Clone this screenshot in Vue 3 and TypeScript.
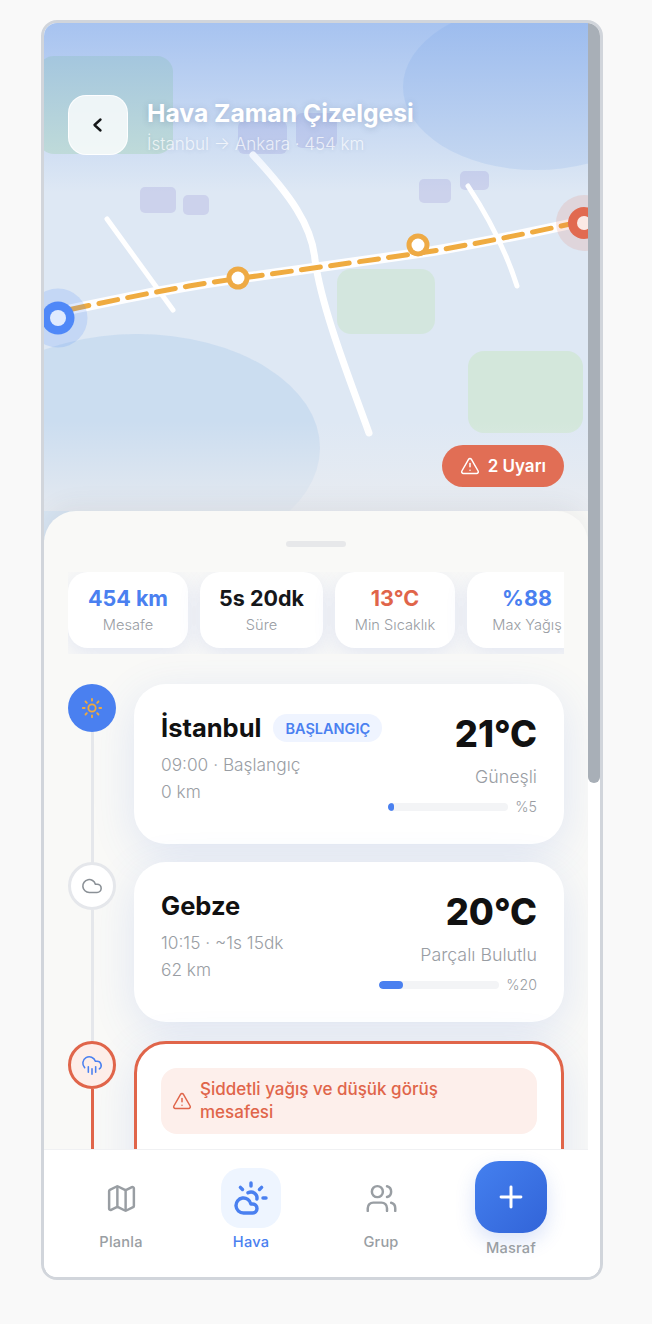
<template>
  <div class="frame">
    <div class="screen">
      <div class="content">
        <section class="map">
          <svg class="map-art" viewBox="44 23 544 517" width="544" height="517" aria-hidden="true">
            <ellipse cx="536" cy="87" rx="133" ry="83" fill="#93b8ea" opacity="0.24" />
            <ellipse cx="137" cy="448" rx="183" ry="114" fill="#bcd3ec" opacity="0.55" />
            <rect x="38" y="56" width="135" height="98" rx="16" fill="#b8dcc0" opacity="0.55" />
            <rect x="337" y="269" width="98" height="65" rx="14" fill="#cfe6d4" opacity="0.7" />
            <rect x="468" y="351" width="115" height="82" rx="16" fill="#cfe6d4" opacity="0.8" />
            <g fill="#ccd2ec">
              <rect x="238" y="121" width="49" height="33" rx="6" />
              <rect x="296" y="113" width="41" height="35" rx="6" />
              <rect x="140" y="187" width="36" height="26" rx="5" />
              <rect x="183" y="195" width="26" height="20" rx="5" />
              <rect x="419" y="179" width="32" height="24" rx="5" />
              <rect x="460" y="171" width="29" height="19" rx="5" />
            </g>
            <g fill="none" stroke="#fff" stroke-linecap="round">
              <path d="M253 155C290 195 312 225 315 260C322 310 350 380 369 433" stroke-width="7" />
              <path d="M107 219L173 310" stroke-width="5" />
              <path d="M468 186C485 212 505 248 517 286" stroke-width="5" />
            </g>
            <path class="route-base" :d="routePath" />
            <path class="route-dash" :d="routePath" />
            <g v-for="p in waypoints" :key="p.x">
              <circle :cx="p.x" :cy="p.y" r="11.5" fill="#eeaa45" />
              <circle :cx="p.x" :cy="p.y" r="6.5" fill="#fff" />
            </g>
            <circle cx="58" cy="318" r="16.5" fill="#5088f8" />
            <circle cx="58" cy="318" r="8" fill="#fff" />
            <circle cx="58" cy="318" r="29.5" fill="#5088f8" opacity="0.18" />
            <circle cx="584" cy="223" r="16" fill="#e16a50" />
            <circle cx="584" cy="223" r="7" fill="#fff" />
            <circle cx="584" cy="223" r="28" fill="#e16a50" opacity="0.15" />
          </svg>
          <div class="map-tint"></div>
          <div class="map-fade"></div>

          <header class="map-header">
            <button class="back-btn" aria-label="Geri">
              <svg viewBox="0 0 24 24" width="24" height="24" fill="none" stroke="#16181a" stroke-width="2.4" stroke-linecap="round" stroke-linejoin="round">
                <path d="m14.5 6.5-6 5.5 6 5.5" />
              </svg>
            </button>
            <div class="map-titles">
              <h1>Hava Zaman Çizelgesi</h1>
              <p>İstanbul → Ankara · 454 km</p>
            </div>
          </header>

          <div class="warn-pill">
            <svg viewBox="0 0 24 24" width="20" height="20" fill="none" stroke="#fff" stroke-width="1.8" stroke-linecap="round" stroke-linejoin="round">
              <path :d="trianglePath" />
              <path d="M12 9v4" />
              <path d="M12 17h.01" />
            </svg>
            <span>2 Uyarı</span>
          </div>
        </section>

        <section class="sheet">
          <div class="handle"></div>

          <div class="stats">
            <div v-for="s in stats" :key="s.label" class="stat" :style="{ minWidth: s.width + 'px' }">
              <strong :class="s.tone">{{ s.value }}</strong>
              <span>{{ s.label }}</span>
            </div>
          </div>

          <div class="timeline">
            <div class="stop">
              <div class="rail">
                <div class="dot dot-start">
                  <svg viewBox="0 0 24 24" width="22" height="22" fill="none" stroke="#f0a93c" stroke-width="2" stroke-linecap="round">
                    <circle cx="12" cy="12" r="4" />
                    <path d="M12 2v2M12 20v2M4.93 4.93l1.41 1.41M17.66 17.66l1.41 1.41M2 12h2M20 12h2M6.34 17.66l-1.41 1.41M19.07 4.93l-1.41 1.41" />
                  </svg>
                </div>
                <div class="rail-line"></div>
              </div>
              <article class="card">
                <div class="card-row">
                  <div class="card-main">
                    <div class="name-row">
                      <h2>İstanbul</h2>
                      <span class="badge">BAŞLANGIÇ</span>
                    </div>
                    <p class="meta first">09:00 · Başlangıç</p>
                    <p class="meta">0 km</p>
                  </div>
                  <div class="card-side">
                    <div class="temp">21°C</div>
                    <div class="cond">Güneşli</div>
                    <div class="rain">
                      <div class="rain-track"><div class="rain-fill" :style="{ width: '5%' }"></div></div>
                      <span>%5</span>
                    </div>
                  </div>
                </div>
              </article>
            </div>

            <div class="stop">
              <div class="rail">
                <div class="dot dot-plain">
                  <svg viewBox="0 0 24 24" width="22" height="22" fill="none" stroke="#8a9096" stroke-width="1.7" stroke-linecap="round" stroke-linejoin="round">
                    <path d="M17.5 19H9a7 7 0 1 1 6.71-9h1.79a4.5 4.5 0 1 1 0 9Z" />
                  </svg>
                </div>
                <div class="rail-line"></div>
              </div>
              <article class="card">
                <div class="card-row">
                  <div class="card-main">
                    <div class="name-row">
                      <h2>Gebze</h2>
                    </div>
                    <p class="meta first">10:15 · ~1s 15dk</p>
                    <p class="meta">62 km</p>
                  </div>
                  <div class="card-side">
                    <div class="temp">20°C</div>
                    <div class="cond">Parçalı Bulutlu</div>
                    <div class="rain">
                      <div class="rain-track"><div class="rain-fill" :style="{ width: '20%' }"></div></div>
                      <span>%20</span>
                    </div>
                  </div>
                </div>
              </article>
            </div>

            <div class="stop stop-alert">
              <div class="rail">
                <div class="dot dot-alert">
                  <svg viewBox="0 0 24 24" width="22" height="22" fill="none" stroke="#4a80f0" stroke-width="1.7" stroke-linecap="round" stroke-linejoin="round">
                    <path d="M4 14.899A7 7 0 1 1 15.71 8h1.79a4.5 4.5 0 0 1 2.5 8.242" />
                    <path d="M16 14v6" />
                    <path d="M8 14v6" />
                    <path d="M12 16v6" />
                  </svg>
                </div>
                <div class="rail-line"></div>
              </div>
              <article class="card card-alert">
                <div class="alert-box">
                  <svg viewBox="0 0 24 24" width="20" height="20" fill="none" stroke="#e0654a" stroke-width="1.8" stroke-linecap="round" stroke-linejoin="round">
                    <path :d="trianglePath" />
                    <path d="M12 9v4" />
                    <path d="M12 17h.01" />
                  </svg>
                  <span>Şiddetli yağış ve düşük görüş mesafesi</span>
                </div>
              </article>
            </div>
          </div>
        </section>
      </div>

      <nav class="tabbar">
        <a class="tab">
          <span class="tab-icon">
            <svg viewBox="0 0 24 24" width="33" height="33" fill="none" stroke="#999ea3" stroke-width="1.8" stroke-linecap="round" stroke-linejoin="round">
              <path d="M14.106 5.553a2 2 0 0 0 1.788 0l3.659-1.83A1 1 0 0 1 21 4.619v12.764a1 1 0 0 1-.553.894l-4.553 2.277a2 2 0 0 1-1.788 0l-4.212-2.106a2 2 0 0 0-1.788 0l-3.659 1.83A1 1 0 0 1 3 19.381V6.618a1 1 0 0 1 .553-.894l4.553-2.277a2 2 0 0 1 1.788 0z" />
              <path d="M15 5.764v15" />
              <path d="M9 3.236v15" />
            </svg>
          </span>
          <span>Planla</span>
        </a>
        <a class="tab active">
          <span class="tab-icon">
            <svg viewBox="0 0 24 24" width="36" height="36" fill="none" stroke="#4a80f0" stroke-width="2.3" stroke-linecap="round" stroke-linejoin="round">
              <path d="M12 2v2" />
              <path d="m4.93 4.93 1.41 1.41" />
              <path d="M20 12h2" />
              <path d="m19.07 4.93-1.41 1.41" />
              <path d="M15.947 12.65a4 4 0 0 0-5.925-4.128" />
              <path d="M13 22H7a5 5 0 1 1 4.9-6H13a3 3 0 0 1 0 6Z" />
            </svg>
          </span>
          <span>Hava</span>
        </a>
        <a class="tab">
          <span class="tab-icon">
            <svg viewBox="0 0 24 24" width="33" height="33" fill="none" stroke="#999ea3" stroke-width="1.8" stroke-linecap="round" stroke-linejoin="round">
              <path d="M16 21v-2a4 4 0 0 0-4-4H6a4 4 0 0 0-4 4v2" />
              <circle cx="9" cy="7" r="4" />
              <path d="M22 21v-2a4 4 0 0 0-3-3.87" />
              <path d="M16 3.13a4 4 0 0 1 0 7.75" />
            </svg>
          </span>
          <span>Grup</span>
        </a>
        <a class="tab tab-add">
          <span class="add-btn">
            <svg viewBox="0 0 24 24" width="34" height="34" fill="none" stroke="#fff" stroke-width="2.1" stroke-linecap="round">
              <path d="M5 12h14" />
              <path d="M12 5v14" />
            </svg>
          </span>
          <span>Masraf</span>
        </a>
      </nav>
    </div>

    <div class="scrollbar"><div class="thumb"></div></div>
  </div>
</template>

<script setup lang="ts">
interface Stat {
  value: string
  label: string
  tone: string
  width: number
}

const trianglePath = 'm21.73 18-8-14a2 2 0 0 0-3.48 0l-8 14A2 2 0 0 0 4 21h16a2 2 0 0 0 1.73-3'
const routePath = 'M58 312C120 299 190 284 257 276C320 267 380 259 433 251C480 243 530 233 584 221'

const waypoints = [
  { x: 238, y: 278 },
  { x: 418, y: 245 }
]

const stats: Stat[] = [
  { value: '454 km', label: 'Mesafe', tone: 'blue', width: 120 },
  { value: '5s 20dk', label: 'Süre', tone: '', width: 123 },
  { value: '13°C', label: 'Min Sıcaklık', tone: 'red', width: 120 },
  { value: '%88', label: 'Max Yağış', tone: 'blue', width: 120 }
]
</script>

<style>
html,
body {
  margin: 0;
  background: #f9f9f9;
}
</style>

<style scoped>
* {
  box-sizing: border-box;
}

.frame {
  display: flex;
  width: 562px;
  height: 1260px;
  margin: 20px 0 0 41px;
  border: 3px solid #d1d5db;
  border-radius: 16px;
  overflow: hidden;
  background: #fff;
  font-family: Inter, "Noto Sans", sans-serif;
  color: #111;
}

.screen {
  display: flex;
  flex-direction: column;
  width: 544px;
  height: 100%;
}

.content {
  flex: 1;
  min-height: 0;
  overflow: hidden;
  background: #f9f9f7;
}

.scrollbar {
  width: 12px;
  background: #fff;
}

.thumb {
  height: 760px;
  border-radius: 0 0 6px 6px;
  background: #a8afb7;
}

/* map */
.map {
  position: relative;
  height: 488px;
  background: #dee8f4;
}

.map-art {
  position: absolute;
  top: 0;
  left: 0;
  display: block;
}

.map-tint {
  position: absolute;
  top: 0;
  left: 0;
  right: 0;
  height: 170px;
  background: linear-gradient(180deg, rgba(100, 150, 235, 0.45), rgba(100, 150, 235, 0));
}

.map-fade {
  position: absolute;
  left: 0;
  right: 0;
  bottom: 0;
  height: 90px;
  background: linear-gradient(180deg, rgba(243, 243, 245, 0), rgba(236, 237, 240, 0.75));
}

.route-base {
  fill: none;
  stroke: #fff;
  stroke-width: 10;
  stroke-opacity: 0.95;
}

.route-dash {
  fill: none;
  stroke: #efab40;
  stroke-width: 5;
  stroke-linecap: round;
  stroke-dasharray: 19 10.3;
  stroke-dashoffset: -12.7;
}

.map-header {
  position: relative;
  display: flex;
  align-items: center;
  gap: 19px;
  padding: 72px 24px 0;
}

.back-btn {
  display: flex;
  align-items: center;
  justify-content: center;
  width: 60px;
  height: 60px;
  padding: 0;
  border: 1px solid rgba(255, 255, 255, 0.9);
  border-radius: 18px;
  background: rgba(255, 255, 255, 0.78);
}

.map-titles h1 {
  margin: 2px 0 5px;
  font-size: 24.7px;
  line-height: 30px;
  font-weight: 700;
  color: #fff;
  text-shadow: 0 1px 6px rgba(60, 80, 120, 0.25);
}

.map-titles p {
  margin: 0;
  font-size: 17px;
  line-height: 22px;
  font-weight: 300;
  color: rgba(255, 255, 255, 0.72);
  text-shadow: 0 1px 4px rgba(60, 80, 120, 0.12);
}

.warn-pill {
  position: absolute;
  top: 422px;
  right: 24px;
  display: flex;
  align-items: center;
  gap: 8px;
  height: 42px;
  padding: 0 18px;
  border-radius: 21px;
  background: #e16e55;
  color: #fff;
  font-size: 17px;
  font-weight: 600;
}

/* sheet */
.sheet {
  position: relative;
  padding: 30px 24px 0;
  border-radius: 32px 32px 0 0;
  background: #f9f9f7;
  box-shadow: 0 -6px 24px rgba(60, 70, 90, 0.07);
}

.handle {
  width: 60px;
  height: 6px;
  margin: 0 auto 25px;
  border-radius: 3px;
  background: #e7e8ea;
}

.stats {
  display: flex;
  gap: 12px;
  height: 82px;
  overflow: hidden;
}

.stat {
  display: flex;
  flex-direction: column;
  align-items: center;
  height: 76px;
  padding-top: 12px;
  border-radius: 20px;
  background: #fff;
  box-shadow: 0 6px 22px rgba(74, 110, 220, 0.13);
}

.stat strong {
  font-size: 21.5px;
  line-height: 28px;
  font-weight: 700;
  color: #15171a;
}

.stat strong.blue {
  color: #4a80f0;
}

.stat strong.red {
  color: #e0654a;
}

.stat span {
  margin-top: 3px;
  font-size: 14.6px;
  line-height: 20px;
  font-weight: 300;
  color: #999da3;
  white-space: nowrap;
}

/* timeline */
.timeline {
  display: flex;
  flex-direction: column;
  gap: 18px;
  margin-top: 30px;
}

.stop {
  display: flex;
  gap: 18px;
}

.rail {
  display: flex;
  flex-direction: column;
  align-items: center;
  flex: none;
  width: 48px;
}

.rail-line {
  flex: 1;
  width: 3px;
  margin-bottom: -19px;
  background: #e5e7eb;
}

.dot {
  position: relative;
  z-index: 1;
  display: flex;
  align-items: center;
  justify-content: center;
  flex: none;
  width: 48px;
  height: 48px;
  border-radius: 50%;
}

.dot-start {
  background: #4a80f0;
}

.dot-plain {
  border: 3px solid #e5e7eb;
  background: #fff;
}

.dot-alert {
  border: 3px solid #e0654a;
  background: #fdeee9;
}

.card {
  flex: 1;
  min-height: 160px;
  padding: 24px;
  border: 3px solid transparent;
  border-radius: 32px;
  background: #fff;
  box-shadow: 0 10px 44px rgba(74, 110, 220, 0.14);
}

.card-row {
  display: flex;
  justify-content: space-between;
}

.name-row {
  display: flex;
  align-items: center;
  gap: 12px;
  height: 28px;
  margin-top: 3px;
}

h2 {
  margin: 0;
  font-size: 25.5px;
  line-height: 28px;
  font-weight: 700;
  color: #111;
}

.badge {
  display: flex;
  align-items: center;
  height: 28px;
  padding: 0 12px;
  border-radius: 14px;
  background: #eff4ff;
  color: #4a80f0;
  font-size: 14.5px;
  font-weight: 600;
}

.meta {
  margin: 0;
  font-size: 17.3px;
  line-height: 27px;
  font-weight: 300;
  color: #999da3;
}

.meta.first {
  margin-top: 9px;
}

.card-side {
  display: flex;
  flex-direction: column;
  align-items: flex-end;
}

.temp {
  margin-top: 1px;
  font-size: 36.3px;
  line-height: 44px;
  font-weight: 800;
  color: #111;
}

.cond {
  margin-top: 9px;
  font-size: 17.8px;
  line-height: 24px;
  font-weight: 300;
  color: #999da3;
}

.rain {
  display: flex;
  align-items: center;
  gap: 7px;
  margin-top: 8px;
  font-size: 14.2px;
  line-height: 20px;
  font-weight: 300;
  color: #999da3;
}

.rain-track {
  width: 120px;
  height: 8px;
  border-radius: 4px;
  background: #f3f4f6;
  overflow: hidden;
}

.rain-fill {
  height: 100%;
  border-radius: 4px;
  background: #4a80f0;
}

.stop-alert {
  margin-top: 1px;
}

.stop-alert .rail-line {
  background: #e0654a;
}

.card-alert {
  border-color: #e0654a;
}

.alert-box {
  display: flex;
  align-items: center;
  gap: 8px;
  padding: 10px 12px 10px 11px;
  border-radius: 16px;
  background: #fdefeb;
  color: #e0654a;
  font-size: 17px;
  line-height: 23px;
  font-weight: 500;
}

.alert-box svg {
  flex: none;
}

.alert-box span {
  max-width: 270px;
}

/* bottom nav */
.tabbar {
  display: flex;
  flex: none;
  height: 128px;
  padding: 18px 12px 0;
  border-top: 1px solid #f0f1f3;
  background: #fff;
}

.tab {
  display: flex;
  flex-direction: column;
  align-items: center;
  flex: 1;
  gap: 4px;
  font-size: 14.6px;
  line-height: 20px;
  font-weight: 450;
  letter-spacing: 0.2px;
  color: #999ea3;
}

.tab-icon {
  display: flex;
  align-items: center;
  justify-content: center;
  width: 60px;
  height: 60px;
  border-radius: 20px;
}

.tab.active {
  color: #4a80f0;
}

.tab.active .tab-icon {
  background: #eef5ff;
}

.tab-add {
  gap: 5px;
  margin-top: -7px;
}

.add-btn {
  display: flex;
  align-items: center;
  justify-content: center;
  width: 72px;
  height: 72px;
  border-radius: 24px;
  background: linear-gradient(135deg, #4480ef, #3264d8);
  box-shadow: 0 8px 20px rgba(50, 100, 216, 0.18);
}
</style>
